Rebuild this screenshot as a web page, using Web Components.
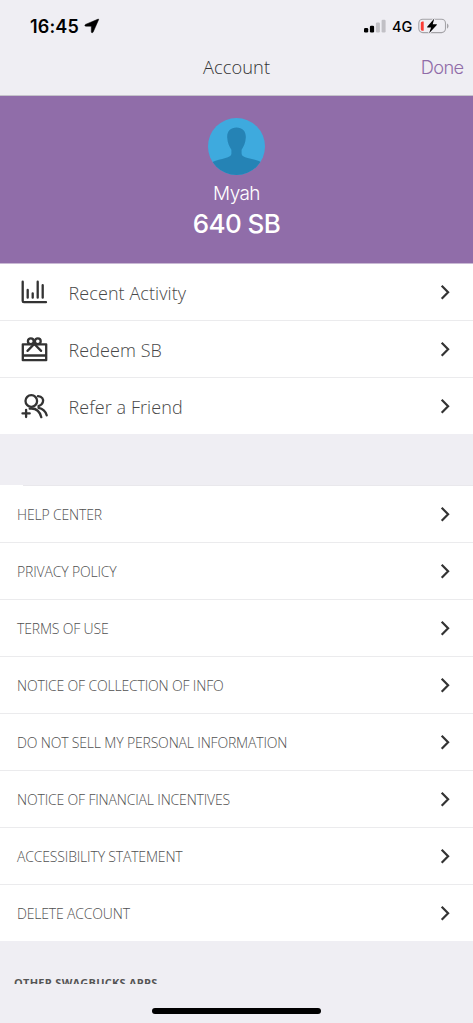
<!DOCTYPE html>
<html lang="en">
<head>
<meta charset="utf-8">
<title>Account</title>
<style>
html,body{margin:0;height:100%;background:#efeef3}
body{font-family:"Open Sans",sans-serif;color:#4c4c4c;overflow:hidden}
</style>
</head>
<body>
<account-screen></account-screen>
<script>
const define = (name, html) => customElements.define(name, class extends HTMLElement {
  connectedCallback() {
    if (this.shadowRoot) return;
    this.attachShadow({ mode: 'open' }).innerHTML = typeof html === 'function' ? html(this) : html;
  }
});

define('status-bar', `
<style>
:host{display:flex;height:52px;box-sizing:border-box;padding:0 24px 0 30px;align-items:center;font-family:Inter,sans-serif;color:#000}
.time{font-size:18px;font-weight:600;line-height:22px;letter-spacing:.15px;width:49px;white-space:nowrap;padding-top:1px}
.loc{margin-left:5px}
.sig{margin-left:auto}
.net{font-size:14.5px;font-weight:500;line-height:20px;margin:1px 6px 0 6px;width:20px;letter-spacing:-.1px}
svg{display:block;flex:none}
</style>
<span class="time">16:45</span>
<svg class="loc" width="16" height="16" viewBox="0 0 16 16"><path d="M14.2 1.100 1.500 6.400c-1 .5-.8 1.800.3 1.800h5.500v5.500c0 1.200 1.400 1.400 1.900.3L14.600 1.700c.2-.5 0-.7-.4-.6z" stroke="#000" stroke-width=".5"/></svg>
<svg class="sig" width="22" height="14" viewBox="0 0 22 14"><rect x="0" y="9" width="4.200" height="4.400" rx="1.200"/><rect x="5.900" y="6.700" width="4.200" height="6.700" rx="1.200"/><g fill="#c1c0c5"><rect x="11.900" y="3.600" width="4" height="9.800" rx="1.200"/><rect x="17.600" y=".8" width="4" height="12.600" rx="1.200"/></g></svg>
<span class="net">4G</span>
<svg width="31" height="16" viewBox="0 0 31 16"><rect x=".8" y="1.300" width="26.700" height="13.300" rx="4" fill="none" stroke="#a4a3a7" stroke-width="1.100"/><path d="M29 5.400c2 .7 2 4.400 0 5.100z" fill="#a4a3a7"/><path d="M5.700 3.500v9.200H4.500c-1.100 0-1.700-.7-1.700-1.800V5.300c0-1.100.6-1.800 1.700-1.800z" fill="#fb3b35"/><path d="M16.300.6 9.200 8.700q-.5.800.4.800h3.500l-2 5.700 7.700-8.200q.5-.8-.4-.8h-3.700z" fill="#000" stroke="#efeef3" stroke-width="2" paint-order="stroke"/></svg>
`);

define('nav-bar', `
<style>
:host{display:grid;grid-template-columns:1fr auto 1fr;align-items:center;height:44px;box-sizing:border-box;padding:0 9.500px 14px;border-bottom:1px solid #c5c3cb}
h1{grid-column:2;margin:0;font:300 18.300px/26px "Open Sans",sans-serif;letter-spacing:.05px;color:#333}
a{justify-self:end;font:350 18.300px/26px Inter,sans-serif;letter-spacing:-.65px;color:#906ca8}
</style>
<h1><slot name="title"></slot></h1><a><slot name="action"></slot></a>
`);

define('profile-card', `
<style>
:host{display:flex;flex-direction:column;align-items:center;height:168px;box-sizing:border-box;padding-top:21.500px;background:#906da9;border-bottom:1px solid #c9b9d4;color:#fff;font-family:Inter,sans-serif}
svg{display:block}
.name{font-size:19px;font-weight:350;line-height:24px;margin-top:7.500px;letter-spacing:-.6px}
.sb{font-size:26px;font-weight:500;line-height:32px;margin-top:2px;letter-spacing:-.6px}
</style>
<svg width="57" height="57" viewBox="0 0 57 57"><defs><clipPath id="disc"><circle cx="28.500" cy="28.500" r="28.500"/></clipPath></defs><g clip-path="url(#disc)"><path fill="#3eaade" d="M0 0h57v57H0z"/><path fill="#2583b5" d="M28.500 9.500c6 0 9.600 3.800 9.300 10-.2 5.500-2.200 9.200-4.200 12.300v4c0 2.200 2.400 3.200 6 4.100 4.500 1.200 9.500 2.200 12.700 3.900L57 57H0l5-13.200c3.200-1.600 8.100-2.700 12.500-3.900 3.500-.9 5.900-1.900 5.900-4.100v-4c-2-3.100-4-6.800-4.200-12.300-.3-6.200 3.300-10 9.300-10z"/></g></svg>
<span class="name"><slot name="name"></slot></span>
<span class="sb"><slot name="balance"></slot></span>
`);

define('chevron-icon', `
<style>:host{display:block;width:10px;height:16px}svg{display:block}</style>
<svg width="10" height="16" viewBox="0 0 10 16"><path d="M1.700 1.800 8.100 8.300l-6.400 6.500" fill="none" stroke="#333" stroke-width="2.200"/></svg>
`);

const icons = {
  activity: '<path d="M1.700 1.700v19.300q0 1.200 1.200 1.200H25"/><path d="M6.700 10v7.700M11.700 13.300v4.400M16.700 1.700v16M21.700 5.200v12.500"/>',
  gift: '<path d="M1.800 7.300h23.400v15.900H1.800zM1.800 18.500h23.400"/><circle cx="9.800" cy="4.200" r="2.900"/><circle cx="16.800" cy="4.200" r="2.900"/><path d="m6.500 13.900 6.800-6.900 6.800 6.900"/>',
  friend: '<circle cx="10.300" cy="7" r="5.800"/><path d="M17 2.100c4.200.2 5.700 3.100 4.900 5.900-.6 2-2.200 3.400-4.400 4.100"/><path d="M8.700 14.600c6.300-.8 10 2.500 11.600 8.600M17.500 13.800c4.800.8 7.100 3.500 8.200 7.500"/><path d="M1.500 19.400h7.200M5.100 15.800v7.200"/>'
};
define('menu-row', el => `
<style>
:host{display:flex;align-items:center;height:57px;box-sizing:border-box;padding:0 23px 0 21px;border-bottom:1px solid #ebebed;background:#fff;font:300 18px/26px "Open Sans",sans-serif;color:#484848}
:host(:last-child){height:56px;border-bottom:0}
.icon{display:block;width:27px;height:25px;margin-right:20.600px;overflow:visible}
.label{flex:1;padding-top:1px;letter-spacing:.07px;white-space:nowrap}
</style>
<svg class="icon" viewBox="0 0 27 25" fill="none" stroke="#333" stroke-width="2.300" stroke-linecap="round" stroke-linejoin="round">${icons[el.getAttribute('icon')]}</svg>
<span class="label"><slot></slot></span><chevron-icon></chevron-icon>
`);

define('link-row', `
<style>
:host{display:flex;align-items:center;height:57px;box-sizing:border-box;padding:0 23px 0 17px;border-bottom:1px solid #ebebed;background:#fff;font:300 14px/20px "Open Sans",sans-serif;color:#505050}
:host(:last-child){height:56px;border-bottom:0}
.label{flex:1;padding-top:1px;letter-spacing:-.17px;white-space:nowrap}
</style>
<span class="label"><slot></slot></span><chevron-icon></chevron-icon>
`);

define('row-group', `
<style>:host{display:block;background:#fff}</style><slot></slot>
`);

define('section-title', `
<style>
:host{display:block;height:43px;box-sizing:border-box;padding:34px 14px 0;overflow:hidden;font:700 11px/16px "Open Sans",sans-serif;color:#555;letter-spacing:.25px}
</style><slot></slot>
`);

define('home-indicator', `
<style>:host{display:flex;height:39px;justify-content:center;align-items:flex-start;padding-top:24px;box-sizing:border-box}i{width:169px;height:6px;border-radius:3px;background:#000}</style><i></i>
`);

define('account-screen', `
<style>
:host{display:flex;flex-direction:column;width:473px;height:1023px;background:#efeef3;overflow:hidden}
:host>*{flex:none}
.links{margin-top:51px;padding-top:1px;background:linear-gradient(#e9e8ec,#e9e8ec) 23px 0/100% 1px no-repeat #fff}
</style>
<status-bar></status-bar>
<nav-bar><span slot="title">Account</span><span slot="action">Done</span></nav-bar>
<profile-card><span slot="name">Myah</span><span slot="balance">640 SB</span></profile-card>
<row-group>
<menu-row icon="activity">Recent Activity</menu-row>
<menu-row icon="gift">Redeem SB</menu-row>
<menu-row icon="friend">Refer a Friend</menu-row>
</row-group>
<row-group class="links">
<link-row>HELP CENTER</link-row>
<link-row>PRIVACY POLICY</link-row>
<link-row>TERMS OF USE</link-row>
<link-row>NOTICE OF COLLECTION OF INFO</link-row>
<link-row>DO NOT SELL MY PERSONAL INFORMATION</link-row>
<link-row>NOTICE OF FINANCIAL INCENTIVES</link-row>
<link-row>ACCESSIBILITY STATEMENT</link-row>
<link-row>DELETE ACCOUNT</link-row>
</row-group>
<section-title>OTHER SWAGBUCKS APPS</section-title>
<home-indicator></home-indicator>
`);
</script>
</body>
</html>
